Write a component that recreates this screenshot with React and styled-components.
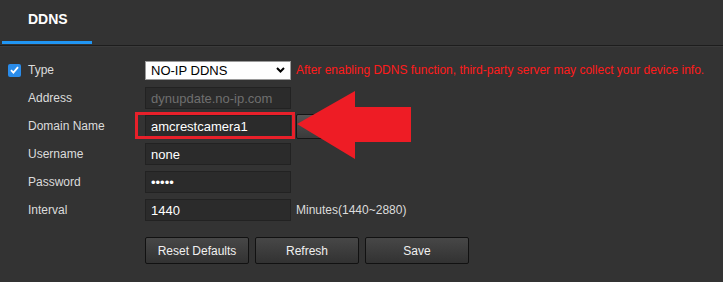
import React from "react";
import styled, { createGlobalStyle } from "styled-components";

const GlobalStyle = createGlobalStyle`
  html, body {
    margin: 0;
    padding: 0;
    background: #333333;
  }
  body {
    font-family: "Liberation Sans", Arial, sans-serif;
    width: 723px;
    height: 282px;
    overflow: hidden;
  }
`;

const Page = styled.div`
  position: relative;
  width: 723px;
  height: 282px;
  background: #333333;
  color: #dcdcdc;
`;

const Header = styled.div`
  display: flex;
  height: 45px;
  border-bottom: 1px solid #1d1d1d;
  box-shadow: 0 1px 0 #3b3b3b;
  padding-left: 2px;
`;

const TabItem = styled.div`
  width: 90px;
  box-sizing: border-box;
  padding: 11px 0 0 26px;
  font-size: 14px;
  font-weight: bold;
  color: #ffffff;
  border-bottom: 3px solid ${(p) => (p.active ? "#2196f3" : "transparent")};
  margin-bottom: 1px;
`;

const Form = styled.div`
  display: flex;
  flex-direction: column;
  padding: 10px 0 0 8px;
`;

const Row = styled.div`
  display: flex;
  align-items: center;
  height: 28px;
`;

const LabelCell = styled.div`
  display: flex;
  align-items: center;
  width: 137px;
  font-size: 12px;
  color: #dcdcdc;
`;

const CheckBox = styled.span`
  display: flex;
  align-items: center;
  justify-content: center;
  width: 13px;
  height: 13px;
  border-radius: 2px;
  background: #2a8cea;
  margin-right: 7px;
`;

const LabelText = styled.span`
  padding-left: ${(p) => (p.indent ? "20px" : "0")};
`;

const Select = styled.div`
  display: flex;
  align-items: center;
  justify-content: space-between;
  box-sizing: border-box;
  width: 146px;
  height: 19px;
  background: #ffffff;
  border: 1px solid #9a9a9a;
  padding: 0 5px 0 5px;
  font-size: 13px;
  color: #000000;
`;

const Field = styled.input`
  box-sizing: border-box;
  width: 146px;
  height: 22px;
  margin: 0;
  padding: 0 5px;
  background: #2b2b2b;
  border: 1px solid #222222;
  outline: none;
  font-family: "Liberation Sans", Arial, sans-serif;
  font-size: 13px;
  color: ${(p) => (p.muted ? "#6f6f6f" : "#ffffff")};
`;

const Note = styled.span`
  margin-left: 5px;
  font-size: 12px;
  color: ${(p) => (p.warn ? "#ff1b1b" : "#dcdcdc")};
  white-space: nowrap;
`;

const SideButton = styled.div`
  margin-left: 5px;
  width: 62px;
  height: 25px;
  box-sizing: border-box;
  border: 1px solid #151515;
  border-radius: 2px;
  background: linear-gradient(#545454, #3a3a3a);
`;

const Highlight = styled.div`
  position: absolute;
  left: 135px;
  top: 112px;
  width: 160px;
  height: 27px;
  box-sizing: border-box;
  border: 3px solid #e8202a;
  pointer-events: none;
`;

const Arrow = styled.svg`
  position: absolute;
  left: 296px;
  top: 90px;
  overflow: visible;
`;

const Actions = styled.div`
  display: flex;
  gap: 6px;
  margin: 13px 0 0 137px;
`;

const Button = styled.button`
  width: 104px;
  height: 27px;
  margin: 0;
  border: 1px solid #111111;
  border-radius: 2px;
  background: linear-gradient(#474747, #323232);
  color: #f0f0f0;
  font-family: "Liberation Sans", Arial, sans-serif;
  font-size: 12px;
  cursor: pointer;
`;

const rows = [
  { label: "Address", value: "dynupdate.no-ip.com", muted: true },
  { label: "Domain Name", value: "amcrestcamera1", side: true },
  { label: "Username", value: "none" },
  { label: "Password", value: "12345", type: "password" },
  { label: "Interval", value: "1440", note: "Minutes(1440~2880)" },
];

export default function App() {
  return (
    <Page>
      <GlobalStyle />
      <Header>
        <TabItem active>DDNS</TabItem>
      </Header>
      <Form>
        <Row>
          <LabelCell>
            <CheckBox>
              <svg width="9" height="8" viewBox="0 0 9 8">
                <path d="M1 4.2 L3.4 6.6 L8 1.2" fill="none" stroke="#fff" strokeWidth="1.8" />
              </svg>
            </CheckBox>
            <span>Type</span>
          </LabelCell>
          <Select>
            <span>NO-IP DDNS</span>
            <svg width="9" height="6" viewBox="0 0 9 6">
              <path d="M1 1 L4.5 4.5 L8 1" fill="none" stroke="#000" strokeWidth="2" />
            </svg>
          </Select>
          <Note warn>
            After enabling DDNS function, third-party server may collect your device info.
          </Note>
        </Row>
        {rows.map((r) => (
          <Row key={r.label}>
            <LabelCell>
              <LabelText indent>{r.label}</LabelText>
            </LabelCell>
            <Field
              type={r.type || "text"}
              readOnly
              defaultValue={r.value}
              muted={r.muted ? 1 : 0}
            />
            {r.side && <SideButton />}
            {r.note && <Note>{r.note}</Note>}
          </Row>
        ))}
        <Actions>
          <Button>Reset Defaults</Button>
          <Button>Refresh</Button>
          <Button>Save</Button>
        </Actions>
      </Form>
      <Highlight />
      <Arrow width="116" height="70" viewBox="0 0 116 70">
        <polygon points="1,34 59,1 59,17 115,17 115,52 59,52 59,69" fill="#ee1c25" />
      </Arrow>
    </Page>
  );
}
